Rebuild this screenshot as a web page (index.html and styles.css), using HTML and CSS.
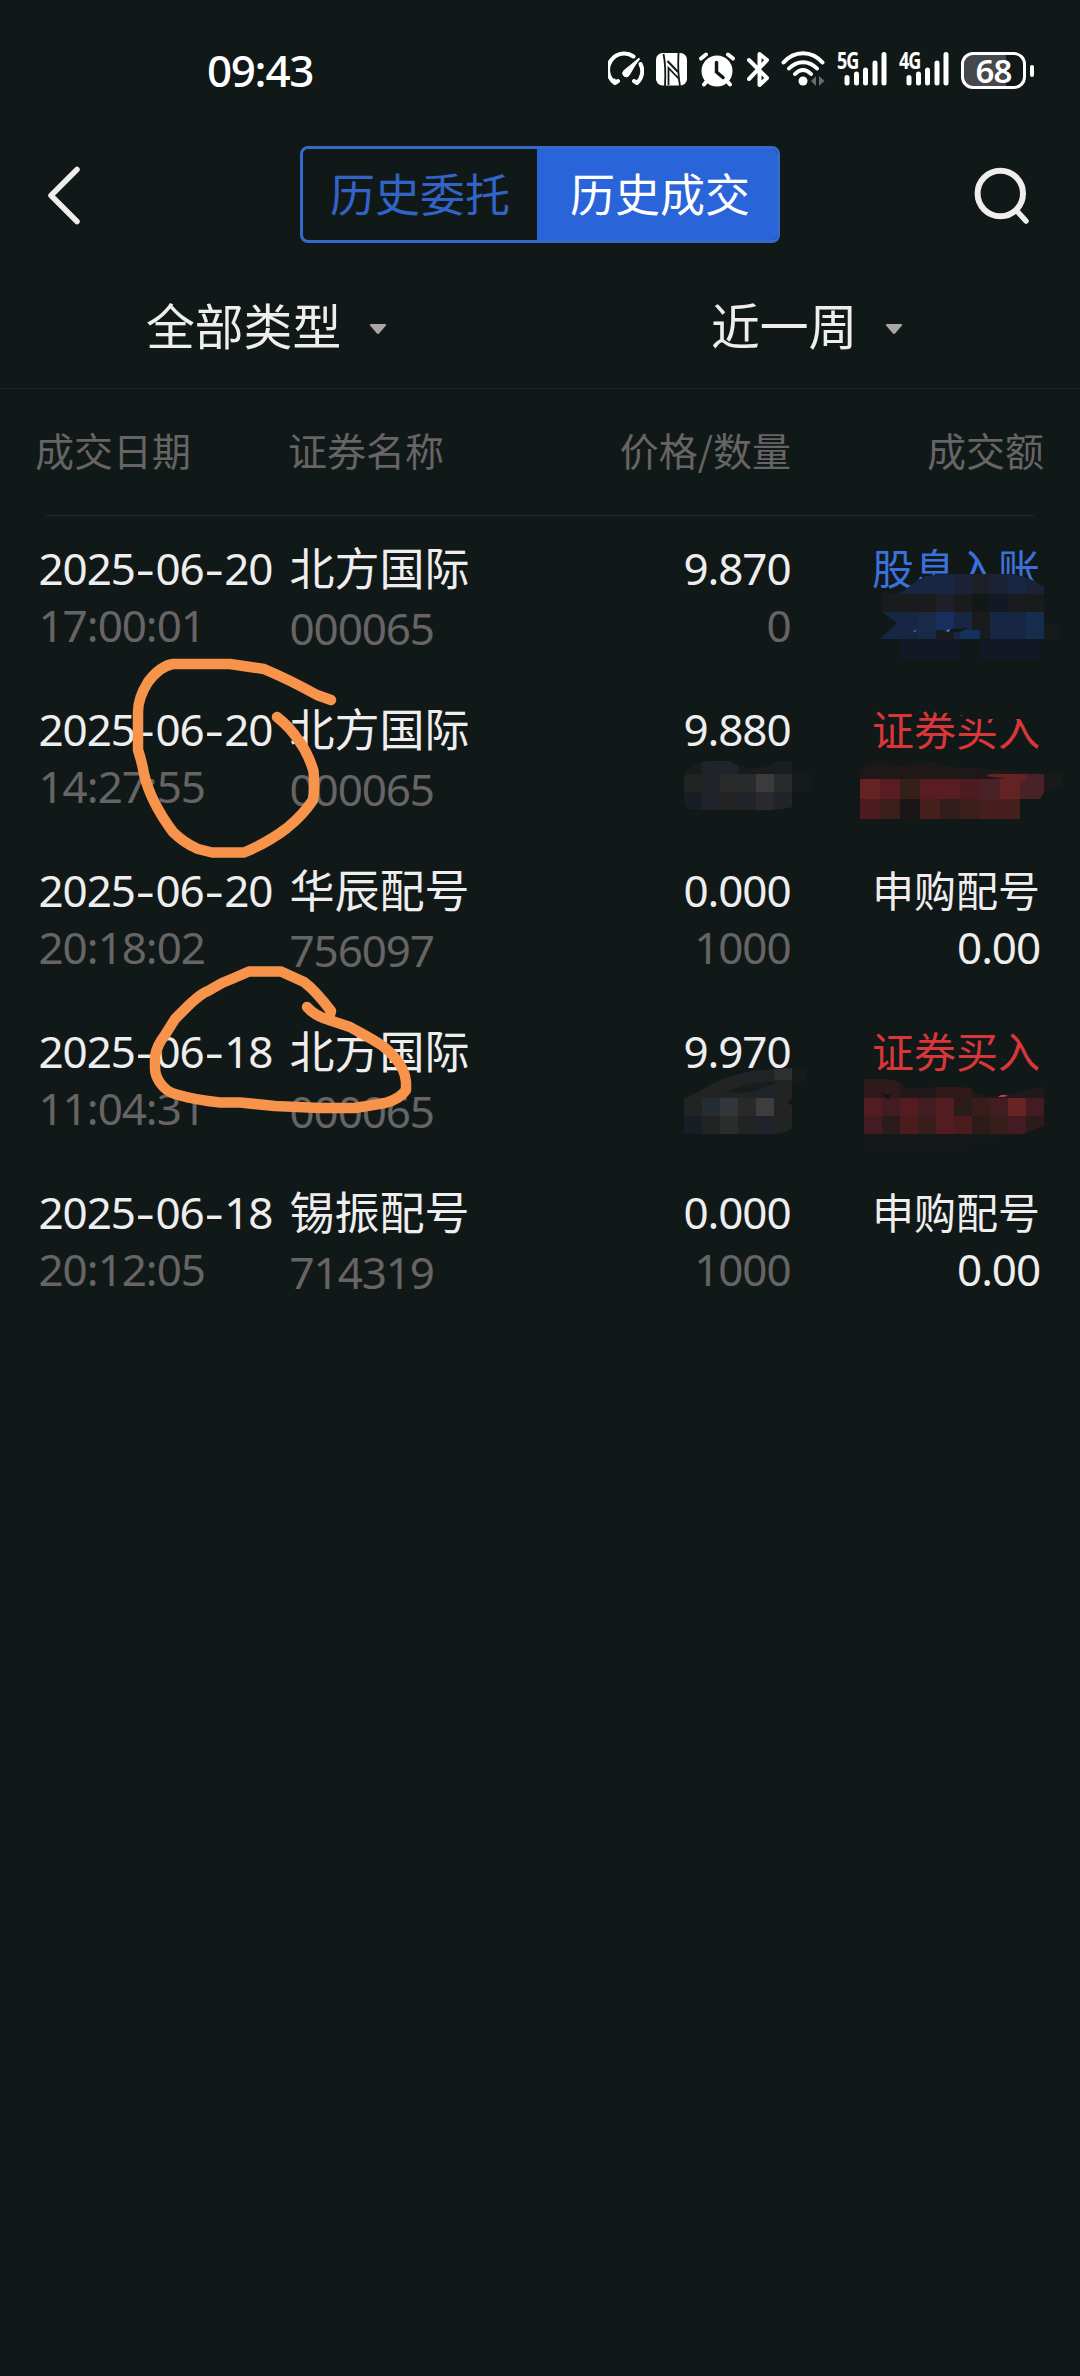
FILE: index.html
```html
<!DOCTYPE html>
<html lang="zh-CN">
<head>
<meta charset="utf-8">
<title>历史成交</title>
<link rel="stylesheet" href="styles.css">
</head>
<body>
<header class="status">
  <div class="clock">09<span class="colon">:</span>43</div>
  <div class="status-icons">
    <svg width="36" height="40" viewBox="607 50 36 40" fill="none" stroke="#fff" stroke-width="4" stroke-linecap="round" stroke-linejoin="round"><path d="M613 80.500L614 83L617 81M614 83A16 16 0 0 1 632.500 56.500M639.500 64A16 16 0 0 1 636 83L633 81"/><path d="M637.500 59.500L625.500 73" stroke-width="2.500"/><path d="M638 58.500L628 75.500A3.500 3.500 0 0 1 622.500 71Z" fill="#fff" stroke-width="1"/></svg>
    <svg width="31" height="40" viewBox="655 50 31 40"><rect x="655" y="53" width="31" height="32.500" rx="6.500" fill="#fff"/><path d="M662.500 54C664.500 63 664.500 76 664 86M679 86C677 76 677 63 677.500 53M667.500 85V68L678.500 79.500" fill="none" stroke="#111918" stroke-width="1.800"/><path d="M666.500 61L677 72" stroke="#111918" stroke-width="2"/></svg>
    <svg width="36" height="40" viewBox="698 50 36 40" stroke-linecap="round"><circle cx="716" cy="71" r="15.500" fill="#fff"/><path d="M700 58.500L705 54.500M732 58.500L727 54.500M706 81L703 84.500M726 81L729 84.500" stroke="#fff" stroke-width="4"/><path d="M715.500 62.500V72L722 77.500" fill="none" stroke="#111918" stroke-width="3.500"/></svg>
    <svg width="22" height="40" viewBox="746 50 22 40" fill="none" stroke="#fff" stroke-width="4" stroke-linecap="round" stroke-linejoin="round"><path d="M748 60L766 78L758.500 85V54L766 60L748 79"/></svg>
    <svg width="44" height="40" viewBox="780 50 44 40" fill="none" stroke="#fff" stroke-width="4" stroke-linecap="round"><path d="M782.500 62.500C793 50 811 50 821.500 62.500M788 68.500C796 60 808 60 816 68.500M794 74C799 68.500 805 68.500 810 74"/><circle cx="802" cy="81" r="4.500" fill="#fff" stroke="none"/><path d="M815 76V86L810 81ZM818 76V86L823.500 81Z" fill="#686c6b" stroke="none"/></svg>
    <div class="signal"><span class="net">5G</span><svg width="50" height="40" viewBox="836 50 50 40" stroke="#fff" stroke-width="5" stroke-linecap="round"><path d="M846 77.500V83M855.500 74V83M864.500 70V83M874 63V83M883 54.500V83"/></svg></div>
    <div class="signal"><span class="net">4G</span><svg width="50" height="40" viewBox="836 50 50 40" stroke="#fff" stroke-width="5" stroke-linecap="round"><path d="M846 77.500V83M855.500 74V83M864.500 70V83M874 63V83M883 54.500V83"/></svg></div>
    <div class="battery"><span class="level">68</span></div>
  </div>
</header>

<nav class="topbar">
  <svg width="36" height="60" viewBox="46 165 36 60" fill="none" stroke="#efedee" stroke-width="5.500" stroke-linecap="round" stroke-linejoin="round"><path d="M77 169.500L51 195.500L77 221.500"/></svg>
  <div class="tabs"><span class="tab">历史委托</span><span class="tab active">历史成交</span></div>
  <svg class="search" width="60" height="60" viewBox="972 165 60 60" fill="none" stroke="#efedee" stroke-width="6" stroke-linecap="round"><ellipse cx="1000.300" cy="193.500" rx="22.700" ry="22.700"/><path d="M1017 211L1026 221" stroke-width="5.500"/></svg>
</nav>

<section class="filters">
  <div class="filter">全部类型<svg class="caret" width="18" height="12" viewBox="0 0 18 12"><path d="M2 1H16Q18 1 16.500 3L10.500 10Q9 12 7.500 10L1.500 3Q0 1 2 1Z" fill="#aaa7a8"/></svg></div>
  <div class="filter second">近一周<svg class="caret" width="18" height="12" viewBox="0 0 18 12"><path d="M2 1H16Q18 1 16.500 3L10.500 10Q9 12 7.500 10L1.500 3Q0 1 2 1Z" fill="#aaa7a8"/></svg></div>
</section>

<section class="head">
  <span>成交日期</span><span>证券名称</span><span class="right">价格/数量</span><span class="right">成交额</span>
</section>

<main class="list">
  <article class="row">
    <div class="cell"><b class="num">2025<i>-</i>06<i>-</i>20</b><small class="num">17<u>:</u>00<u>:</u>01</small></div>
    <div class="cell"><b class="name">北方国际</b><small class="num code">000065</small></div>
    <div class="cell right"><b class="num">9.870</b><small class="num">0</small></div>
    <div class="cell right"><b class="act blue">股息入账</b></div>
  </article>
  <article class="row">
    <div class="cell"><b class="num">2025<i>-</i>06<i>-</i>20</b><small class="num">14<u>:</u>27<u>:</u>55</small></div>
    <div class="cell"><b class="name">北方国际</b><small class="num code">000065</small></div>
    <div class="cell right"><b class="num">9.880</b></div>
    <div class="cell right"><b class="act red">证券买入</b></div>
  </article>
  <article class="row">
    <div class="cell"><b class="num">2025<i>-</i>06<i>-</i>20</b><small class="num">20<u>:</u>18<u>:</u>02</small></div>
    <div class="cell"><b class="name">华辰配号</b><small class="num code">756097</small></div>
    <div class="cell right"><b class="num">0.000</b><small class="num">1000</small></div>
    <div class="cell right"><b class="act">申购配号</b><small class="num amount">0.00</small></div>
  </article>
  <article class="row">
    <div class="cell"><b class="num">2025<i>-</i>06<i>-</i>18</b><small class="num">11<u>:</u>04<u>:</u>31</small></div>
    <div class="cell"><b class="name">北方国际</b><small class="num code">000065</small></div>
    <div class="cell right"><b class="num">9.970</b></div>
    <div class="cell right"><b class="act red">证券买入</b></div>
  </article>
  <article class="row">
    <div class="cell"><b class="num">2025<i>-</i>06<i>-</i>18</b><small class="num">20<u>:</u>12<u>:</u>05</small></div>
    <div class="cell"><b class="name">锡振配号</b><small class="num code">714319</small></div>
    <div class="cell right"><b class="num">0.000</b><small class="num">1000</small></div>
    <div class="cell right"><b class="act">申购配号</b><small class="num amount">0.00</small></div>
  </article>

  <svg class="markup" width="1080" height="805" viewBox="0 516 1080 805">
    <defs>
      <clipPath id="c1"><path d="M900 593C915 585 915 574 950 574H1010C1030 576 1036 584 1044 586V624H1060V639H1040V660H900V639H880L897 623L882 612V593Z"/></clipPath>
      <clipPath id="c2"><path d="M684 777Q688 763 710 761H730Q740 768 750 768Q768 769 778 761H792V774H811V791H792V807Q780 810 770 810H692Q684 808 684 798Z"/></clipPath>
      <clipPath id="c3"><path d="M860 771Q868 761 885 762Q892 768 905 765Q925 762 935 762Q945 767 970 768L1044 774H1062V785L1044 792L1040 799H1020V819H860Z"/></clipPath>
      <clipPath id="c4"><path d="M684 1099Q710 1085 722 1079Q750 1069 792 1068H806V1080L792 1086V1098L788 1102L792 1106V1128Q785 1134 775 1134H684Z"/></clipPath>
      <clipPath id="c5"><path d="M864 1079H885Q900 1080 908 1089Q940 1085 970 1088Q980 1098 1000 1096L1044 1086V1126L1024 1134L960 1148H864Z"/></clipPath>
    </defs>
    <g clip-path="url(#c1)" shape-rendering="crispEdges">
      <path fill="#1a1b1c" d="M880 573h182v87h-182z"/>
      <path fill="#182641" d="M900 573h54v21h-54zM1008 573h18v21h-18z"/><path fill="#1b2235" d="M954 573h18v21h-18zM990 573h18v21h-18zM1026 573h18v21h-18z"/>
      <path fill="#1d2028" d="M972 573h18v21h-18zM936 594h18v18h-18z"/><path fill="#111918" d="M972 594h18v18h-18z"/><path fill="#121824" d="M990 594h18v18h-18zM900 639h60v21h-60zM980 639h60v21h-60z"/>
      <path fill="#172642" d="M880 612h38v27h-38zM954 612h18v27h-18zM990 612h36v27h-36z"/><path fill="#182a48" d="M918 612h18v27h-18z"/><path fill="#182f5e" d="M936 612h18v18h-18z"/><path fill="#172d50" d="M1026 612h18v27h-18z"/><path fill="#12315c" d="M960 630h20v9h-20z"/><path fill="#111918" d="M960 639h20v21h-20z"/><path fill="#171a1a" d="M1044 612h18v27h-18z"/>
    </g>
    <path fill="#4280f0" d="M913 631l4-1-2 2zM945 631l5-2-1 3z"/><path fill="#111918" d="M951 629l17-1-8 4h-9z"/>
    <g clip-path="url(#c2)" shape-rendering="crispEdges">
      <path fill="#21242a" d="M684 760h108v50H684z"/><path fill="#191c1c" d="M684 760h18v14h-18zM738 760h36v14h-36z"/><path fill="#161a1a" d="M792 774h19v17h-19z"/><path fill="#222421" d="M684 774h18v18h-18z"/><path fill="#292a2b" d="M720 774h36v18h-36zM774 774h18v18h-18zM756 792h18v18h-18z"/><path fill="#3b3b3c" d="M756 774h18v18h-18z"/><path fill="#242323" d="M720 792h18v18h-18z"/><path fill="#191e25" d="M684 792h18v18h-18zM774 760h18v14h-18z"/>
    </g>
    <g clip-path="url(#c3)" shape-rendering="crispEdges">
      <path fill="#1e1819" d="M860 760h202v35H860z"/><path fill="#642223" d="M860 779h20v20h-20zM1000 779h20v20h-20z"/><path fill="#5a1c23" d="M880 779h20v20h-20zM920 779h40v20h-40z"/><path fill="#352019" d="M900 779h20v20h-20z"/><path fill="#4f1b23" d="M960 779h20v20h-20zM860 799h20v20h-20z"/><path fill="#482226" d="M980 779h20v20h-20zM1020 774h24v25h-24z"/><path fill="#3c1f1b" d="M880 799h20v20h-20zM960 799h20v20h-20z"/><path fill="#1b1519" d="M900 799h20v20h-20z"/><path fill="#47201d" d="M920 799h20v20h-20zM980 799h40v20h-40z"/><path fill="#321c1c" d="M940 799h20v20h-20z"/><path fill="#181919" d="M1044 774h18v12h-18z"/>
    </g>
    <path fill="#642223" d="M990 774h36v8l-40-6z"/>
    <path fill="#111918" d="M920 700H1040V719H987L984 723L981 719L965 717L955 712L945 713L938 715L932 709L920 713Z"/>
    <g clip-path="url(#c4)" shape-rendering="crispEdges">
      <path fill="#222323" d="M684 1068h108v66H684z"/><path fill="#171a1a" d="M792 1068h14v18h-14z"/><path fill="#242e32" d="M702 1098h18v18h-18z"/><path fill="#31353c" d="M720 1098h18v18h-18z"/><path fill="#29292a" d="M738 1098h18v18h-18z"/><path fill="#3d3d3e" d="M756 1098h18v18h-18z"/><path fill="#302f30" d="M774 1068h18v12h-18z"/><path fill="#191d25" d="M684 1116h18v18h-18z"/><path fill="#2b2d2b" d="M720 1116h18v18h-18z"/><path fill="#1f232b" d="M756 1116h18v18h-18zM756 1080h18v18h-18zM738 1068h18v12h-18z"/>
    </g>
    <path fill="#171c1c" d="M724 1093Q750 1081 779 1082Q765 1087 752 1092Z"/>
    <g clip-path="url(#c5)" shape-rendering="crispEdges">
      <path fill="#201819" d="M864 1078h180v70H864z"/><path fill="#30191b" d="M864 1079h36v19h-36zM936 1086h36v12h-36z"/><path fill="#521c22" d="M864 1098h18v18h-18zM900 1098h18v18h-18zM936 1098h18v36h-18z"/><path fill="#431c23" d="M882 1098h18v18h-18zM918 1098h18v18h-18zM990 1098h18v18h-18zM1026 1098h18v18h-18zM864 1116h18v18h-18zM1008 1116h18v18h-18z"/><path fill="#391d1a" d="M972 1098h18v18h-18zM990 1116h18v18h-18zM918 1116h18v18h-18z"/><path fill="#2b1b1a" d="M954 1098h18v18h-18zM882 1116h18v18h-18zM972 1116h18v18h-18zM1026 1116h18v18h-18z"/><path fill="#672423" d="M1008 1098h18v18h-18z"/><path fill="#4c1c1c" d="M900 1116h18v18h-18zM954 1116h18v18h-18z"/><path fill="#151818" d="M864 1134h180v14H864z"/>
    </g>
    <path fill="#111918" d="M879 1092L891 1095L888 1100Z"/><path fill="#c83b3c" d="M998 1097Q1002 1093 1008 1096L1003 1097Z"/>
    <g fill="none" stroke="#f7934b" stroke-width="10.500" stroke-linecap="round" stroke-linejoin="round">
      <path d="M331 700L317 695Q290 680 264 669L230 664H173Q160 666 148 682Q138 698 138 712V750Q142 762 144 774C149 795 158 812 173 832Q184 843 198 849L212 852.500H244C262 845 274 838 287 828Q303 815 313 800Q315 790 313.500 771Q308 753 299 741Q290 727 277 717"/>
      <path d="M307 1007Q315 1016 329 1020L350 1027C375 1041 386 1046 395 1058Q405 1069 406 1082V1090Q400 1099 385 1103L355 1108H320L275 1106L240 1102.500H220Q195 1100 175 1094C162 1090 155 1077 155 1068V1056Q157 1045 165 1035L175 1019L190 1004Q202 993 208 991L222 983L234 978L249 971.500H281L304 982Q315 990 331 1011L329 1018"/>
    </g>
  </svg>
</main>
</body>
</html>
```
FILE: styles.css
```css
* { box-sizing: border-box; }
body {
  margin: 0;
  width: 1080px;
  min-height: 2376px;
  background: #111918;
  color: #efedee;
  font-family: "Noto Sans CJK SC", sans-serif;
}
svg { display: block; flex: none; }

.status {
  height: 140px;
  padding-right: 46px;
  display: flex;
  align-items: center;
  justify-content: space-between;
  color: #fff;
  font-family: "Noto Sans", sans-serif;
}
.clock {
  padding-left: 207px;
  font-size: 44px;
  font-weight: 500;
  line-height: 60px;
  letter-spacing: -1.4px;
}
.colon {
  display: inline-block;
  width: 11px;
  text-align: center;
  letter-spacing: 0;
}
.status-icons { display: flex; gap: 12px; align-items: center; }
.signal { position: relative; }
.net {
  position: absolute;
  left: 0;
  top: -1px;
  font: 700 22.5px/23px "Open Sans", sans-serif;
  letter-spacing: -1.2px;
  transform: scaleX(.8);
  transform-origin: left;
}
.battery {
  position: relative;
  width: 65px;
  height: 37px;
  margin-right: 8px;
  border: 3px solid #fff;
  border-radius: 12px;
  background: linear-gradient(to right, #47484c 0 42px, transparent 42px);
  display: flex;
  align-items: center;
  justify-content: center;
}
.battery::after {
  content: "";
  position: absolute;
  right: -11px;
  top: 10px;
  width: 4px;
  height: 12px;
  border-radius: 2px;
  background: #fff;
}
.level { font-size: 33px; font-weight: 600; line-height: 31px; letter-spacing: -1px; }

.topbar {
  height: 110px;
  padding: 0 48px 0 46px;
  display: flex;
  align-items: center;
}
.tabs {
  width: 480px;
  height: 97px;
  margin: -1px 0 0 218px;
  display: flex;
  border: 3px solid #356acb;
  border-radius: 8px;
  overflow: hidden;
}
.search { margin-left: auto; }
.tab {
  width: 234px;
  text-align: center;
  font-size: 45px;
  line-height: 87px;
  color: #3264c8;
}
.tab.active { width: 240px; padding-left: 6px; background: #2965d9; color: #fff; }

.filters {
  height: 139px;
  padding: 4px 0 0 146px;
  display: flex;
  border-bottom: 1px solid #1d2225;
  font-size: 48.800px;
  line-height: 150px;
}
.filter { width: 565px; display: flex; align-items: center; height: 139px; }
.filter.second { width: auto; }
.caret { margin: 11px 0 0 28px; }

.head {
  height: 127px;
  padding: 0 36px 0 35px;
  display: grid;
  grid-template-columns: 253px 201px 302px 1fr;
  font-size: 39px;
  line-height: 121px;
  color: #676465;
  position: relative;
}
.head::after {
  content: "";
  position: absolute;
  left: 46px;
  right: 46px;
  bottom: 0;
  height: 1px;
  background: #242929;
}

.list { position: relative; }
.row {
  height: 161px;
  padding: 24px 40px 0 38.500px;
  display: grid;
  grid-template-columns: 251px 251px 250px 1fr;
  border-bottom: 1px solid #141a19;
}
.cell { display: flex; flex-direction: column; }
.cell b, .cell small {
  font-weight: 400;
  font-size: 44px;
  line-height: 57px;
  height: 57px;
  white-space: nowrap;
}
.cell small { color: #676465; }
.cell .num { font-family: "Noto Sans", sans-serif; letter-spacing: -1.1px; }
.cell .name { font-size: 45px; line-height: 54px; }
.cell .act { font-size: 42px; line-height: 53px; }
.cell .code { position: relative; top: 3px; }
.cell .amount { color: #efedee; }
.num i, .num u {
  display: inline-block;
  font-style: normal;
  text-decoration: none;
  text-align: center;
  letter-spacing: 0;
}
.num i { width: 20.7px; transform: scaleX(1.35); }
.num u { width: 11px; }
.cell .blue { color: #3a71dc; }
.cell .red { color: #d93639; }
.right { text-align: right; }
.markup { position: absolute; left: 0; top: 0; }
```
